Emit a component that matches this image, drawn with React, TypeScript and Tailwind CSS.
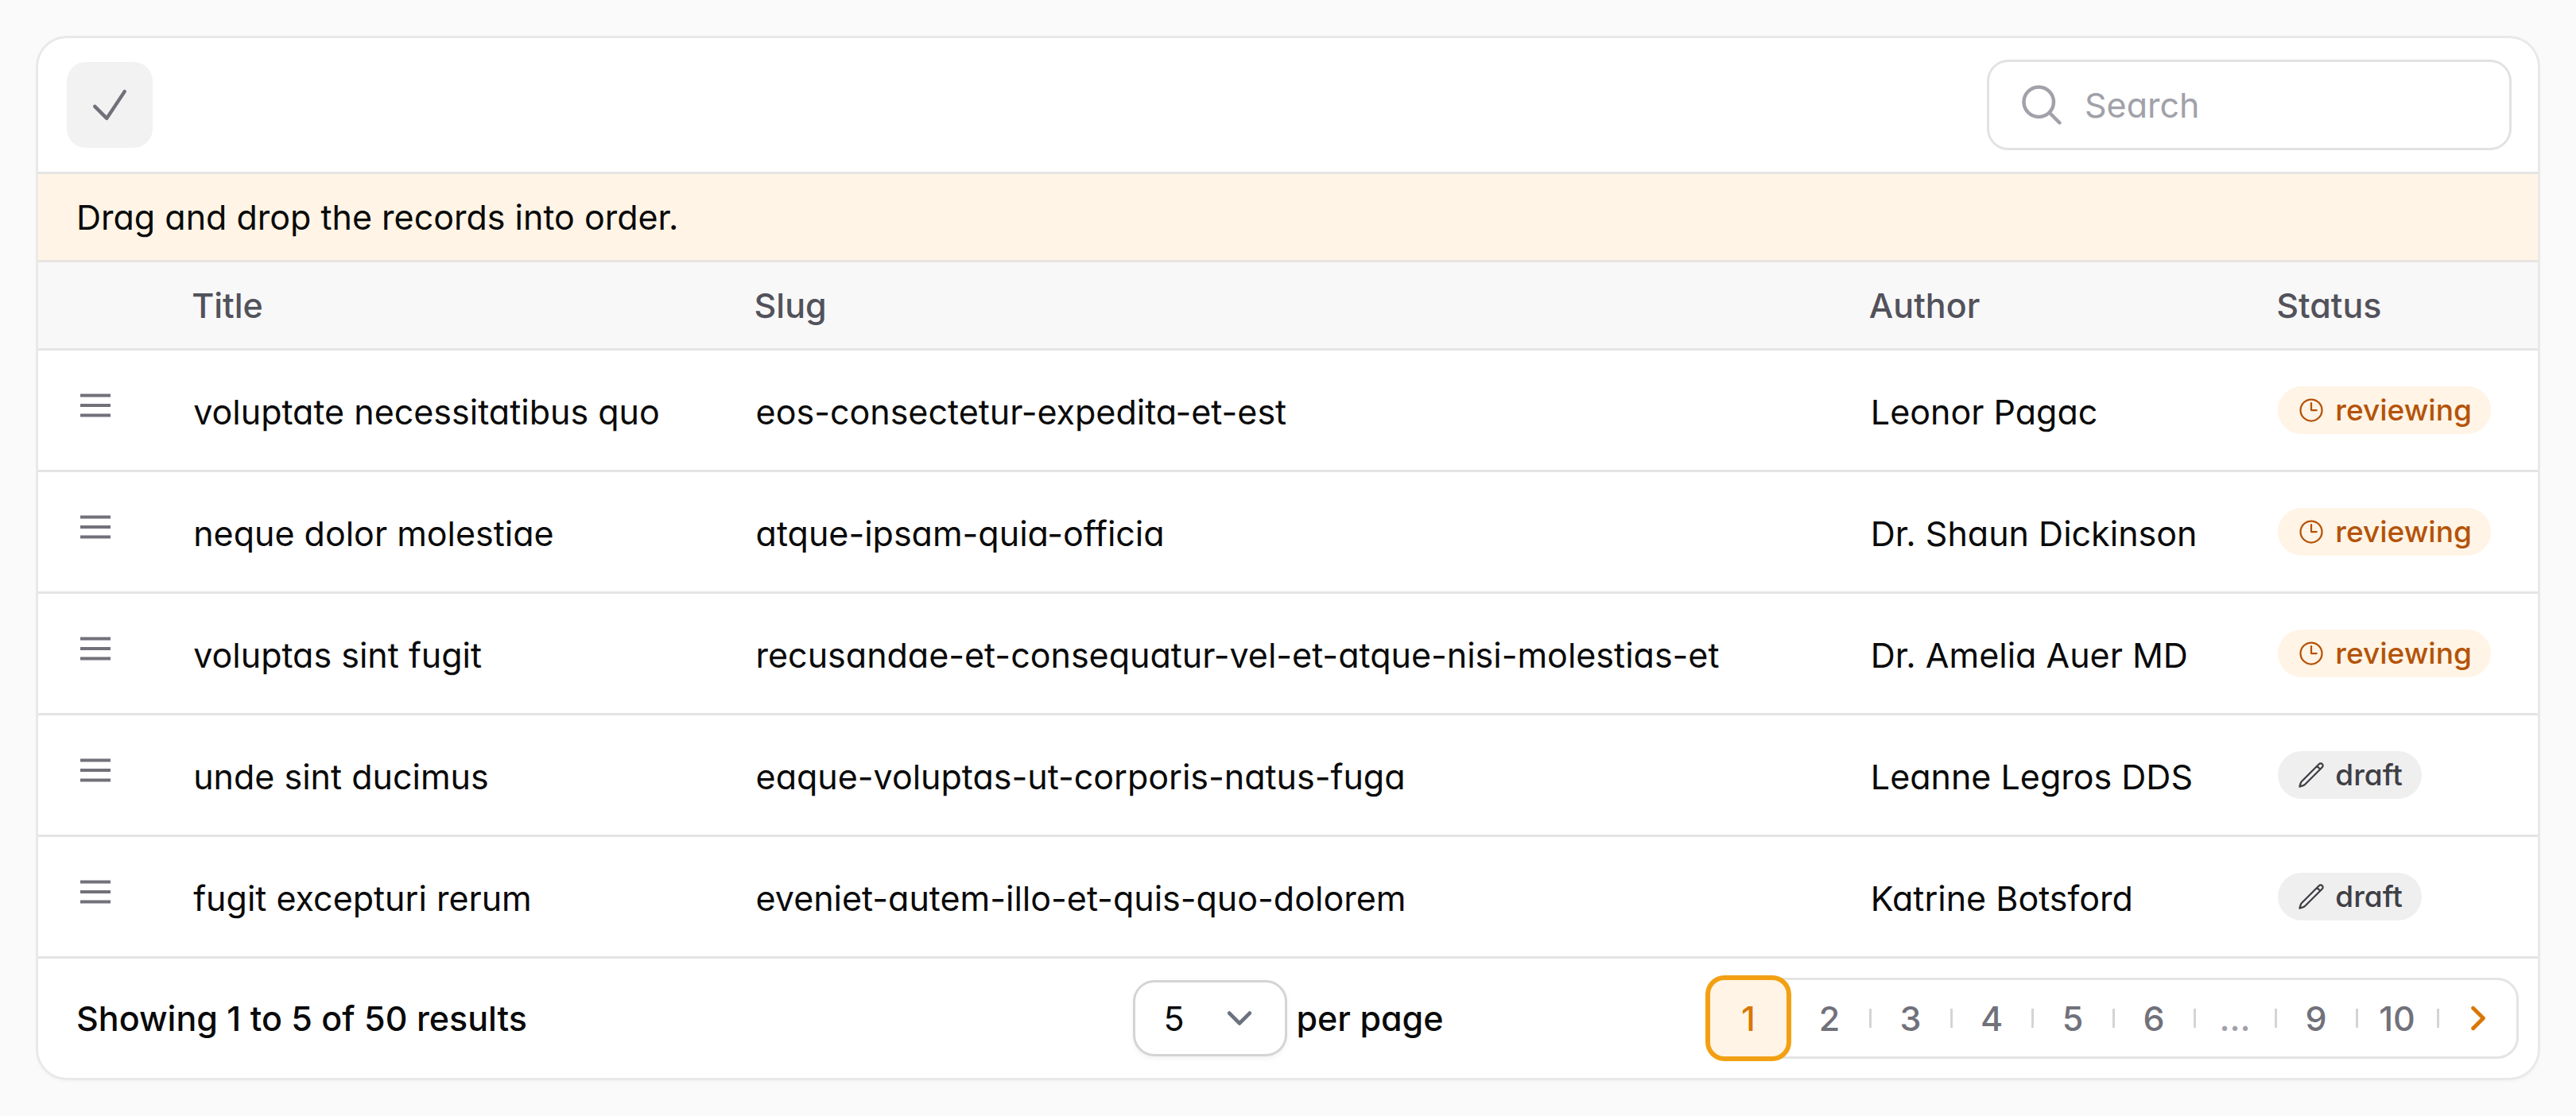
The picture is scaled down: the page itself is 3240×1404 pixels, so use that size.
import React from 'react';

type Status = 'reviewing' | 'draft';

const rows: { title: string; slug: string; author: string; status: Status }[] = [
  { title: 'voluptate necessitatibus quo', slug: 'eos-consectetur-expedita-et-est', author: 'Leonor Pagac', status: 'reviewing' },
  { title: 'neque dolor molestiae', slug: 'atque-ipsam-quia-officia', author: 'Dr. Shaun Dickinson', status: 'reviewing' },
  { title: 'voluptas sint fugit', slug: 'recusandae-et-consequatur-vel-et-atque-nisi-molestias-et', author: 'Dr. Amelia Auer MD', status: 'reviewing' },
  { title: 'unde sint ducimus', slug: 'eaque-voluptas-ut-corporis-natus-fuga', author: 'Leanne Legros DDS', status: 'draft' },
  { title: 'fugit excepturi rerum', slug: 'eveniet-autem-illo-et-quis-quo-dolorem', author: 'Katrine Botsford', status: 'draft' },
];

const pages = ['1', '2', '3', '4', '5', '6', '...', '9', '10'];

function Icon({ d, className, stroke = 1.5 }: { d: string; className: string; stroke?: number }) {
  return (
    <svg viewBox="0 0 24 24" fill="none" stroke="currentColor" strokeWidth={stroke} strokeLinecap="round" strokeLinejoin="round" className={className} aria-hidden="true">
      <path d={d} />
    </svg>
  );
}

function Chevron({ d, className }: { d: string; className: string }) {
  return (
    <svg viewBox="0 0 20 20" fill="none" stroke="currentColor" strokeWidth="1.5" strokeLinecap="round" strokeLinejoin="round" className={className} aria-hidden="true">
      <path d={d} />
    </svg>
  );
}

function Badge({ status }: { status: Status }) {
  const reviewing = status === 'reviewing';
  return (
    <span
      className={
        reviewing
          ? 'inline-flex h-[60px] items-center gap-3 rounded-full bg-[#fff4e5] px-6 text-[37px] font-medium text-[#b45309]'
          : 'inline-flex h-[60px] items-center gap-3 rounded-full bg-[#efefef] px-6 text-[37px] font-medium text-[#3f3f46]'
      }
    >
      <Icon
        className="size-9"
        d={
          reviewing
            ? 'M12 6v6h4.5m4.5 0a9 9 0 11-18 0 9 9 0 0118 0z'
            : 'M16.862 4.487l1.687-1.688a1.875 1.875 0 112.652 2.652L6.832 19.82a4.5 4.5 0 01-1.897 1.13l-2.685.8.8-2.685a4.5 4.5 0 011.13-1.897L16.863 4.487zm0 0L19.5 7.125'
        }
      />
      {status}
    </span>
  );
}

function Pagination() {
  return (
    <nav aria-label="Pagination" className="justify-self-end">
      <ul className="flex items-center rounded-[27px] border-[3px] border-[#e4e4e4] font-medium text-[#71717a]">
        {pages.map((page, i) => (
          <li key={page} className="flex items-center">
            {page === '...' ? (
              <span className="flex h-24 w-24 items-center justify-center text-[#a1a1aa]">...</span>
            ) : (
              <button
                type="button"
                aria-current={i === 0 ? 'page' : undefined}
                className={
                  i === 0
                    ? 'h-24 w-24 rounded-[18px] bg-[#fff4e5] text-[#d97706] ring-[6px] ring-[#f2a013]'
                    : 'h-24 w-24'
                }
              >
                {page}
              </button>
            )}
            <span className="flex w-[6px] justify-center">
              {i > 0 && <span className="h-6 w-[3px] bg-[#d4d4d4]" />}
            </span>
          </li>
        ))}
        <li>
          <button type="button" aria-label="Next page" className="flex h-24 w-24 items-center justify-center text-[#d97706]">
            <Chevron className="size-16" d="M8 6l4 4-4 4" />
          </button>
        </li>
      </ul>
    </nav>
  );
}

export default function App() {
  return (
    <main className="min-h-screen bg-[#fafafa] p-12 font-['Inter',sans-serif] text-[43px] leading-[60px] text-[#0a0a0a] [font-feature-settings:'cv11']">
      <section className="overflow-hidden rounded-[36px] bg-white shadow-[0_3px_6px_rgba(0,0,0,0.05)] ring-[3px] ring-[#e9e9e9]">
        <header className="flex h-[171px] items-center justify-between border-b-[3px] border-[#e4e4e4] px-9">
          <button type="button" aria-label="Finish reordering" className="flex size-[108px] items-center justify-center rounded-3xl bg-[#f2f2f2] text-[#71717a]">
            <Icon className="size-[60px]" stroke={1.8} d="M4.5 12.75l6 6 9-13.5" />
          </button>
          <label className="flex h-[108px] w-[654px] items-center gap-6 rounded-3xl px-9 text-[#a1a1aa] ring-[3px] ring-[#e2e2e2]">
            <Icon className="size-[60px] shrink-0" stroke={1.8} d="M21 21l-5.197-5.197m0 0A7.5 7.5 0 105.196 5.196a7.5 7.5 0 0010.607 10.607z" />
            <input type="search" placeholder="Search" aria-label="Search" className="min-w-0 flex-1 bg-transparent outline-none placeholder:text-[#a1a1aa]" />
          </label>
        </header>

        <p className="flex h-[111px] items-center border-b-[3px] border-[#e6e3e0] bg-[#fff4e5] px-12">
          Drag and drop the records into order.
        </p>

        <table className="w-full table-fixed border-separate border-spacing-0 text-left">
          <colgroup>
            <col className="w-[5%]" />
            <col className="w-[22.5%]" />
            <col />
            <col className="w-[16.3%]" />
            <col className="w-[11.6%]" />
          </colgroup>
          <thead>
            <tr className="h-[111px] bg-[#f8f8f8] text-[#52525b] *:border-b-[3px] *:border-[#e4e4e4]">
              <th aria-label="Reorder" />
              <th className="pl-9 font-medium">Title</th>
              <th className="pl-9 font-medium">Slug</th>
              <th className="pl-9 font-medium">Author</th>
              <th className="pl-9 font-medium">Status</th>
            </tr>
          </thead>
          <tbody>
            {rows.map((row) => (
              <tr key={row.slug} className="h-[153px] whitespace-nowrap *:border-b-[3px] *:border-[#e4e4e4]">
                <td className="pb-3 pl-12">
                  <button type="button" aria-label={`Reorder ${row.title}`} className="block text-[#71717a]">
                    <svg viewBox="0 0 48 48" fill="none" stroke="currentColor" strokeWidth="4" className="size-12" aria-hidden="true">
                      <path d="M5 11.500h38M5 24h38M5 36.500h38" />
                    </svg>
                  </button>
                </td>
                <td className="pt-1 pl-[38px]">{row.title}</td>
                <td className="pt-1 pl-[38px]">{row.slug}</td>
                <td className="pt-1 pl-[38px]">{row.author}</td>
                <td className="pl-[38px]">
                  <div className="flex">
                    <Badge status={row.status} />
                  </div>
                </td>
              </tr>
            ))}
          </tbody>
        </table>

        <footer className="grid h-[150px] grid-cols-[1fr_auto_1fr] items-center px-6">
          <p className="pl-6 font-medium">Showing 1 to 5 of 50 results</p>
          <label className="flex items-center gap-3 font-medium">
            <span className="relative flex items-center">
              <select
                defaultValue="5"
                aria-label="Results per page"
                className="h-24 w-[194px] appearance-none rounded-[27px] border-[3px] border-[#d3d4d6] bg-white pl-9 font-normal shadow-[0_3px_6px_rgba(0,0,0,0.05)]"
              >
                <option>5</option>
                <option>10</option>
                <option>25</option>
                <option>50</option>
              </select>
              <Chevron className="pointer-events-none absolute right-7 size-16 text-[#6b7280]" d="M6 8l4 4 4-4" />
            </span>
            per page
          </label>
          <Pagination />
        </footer>
      </section>
    </main>
  );
}
